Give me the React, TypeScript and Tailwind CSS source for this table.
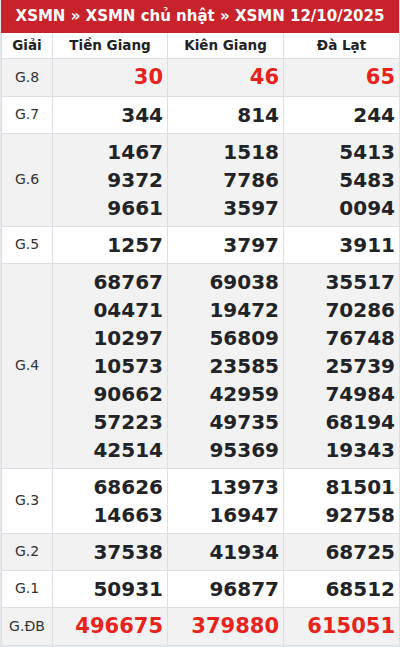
import React from "react";

const rows: { label: string; nums: string[][]; red?: boolean; gray: boolean }[] = [
  { label: "G.8", nums: [["30"], ["46"], ["65"]], red: true, gray: true },
  { label: "G.7", nums: [["344"], ["814"], ["244"]], gray: false },
  { label: "G.6", nums: [["1467", "9372", "9661"], ["1518", "7786", "3597"], ["5413", "5483", "0094"]], gray: true },
  { label: "G.5", nums: [["1257"], ["3797"], ["3911"]], gray: false },
  {
    label: "G.4",
    nums: [
      ["68767", "04471", "10297", "10573", "90662", "57223", "42514"],
      ["69038", "19472", "56809", "23585", "42959", "49735", "95369"],
      ["35517", "70286", "76748", "25739", "74984", "68194", "19343"],
    ],
    gray: true,
  },
  { label: "G.3", nums: [["68626", "14663"], ["13973", "16947"], ["81501", "92758"]], gray: false },
  { label: "G.2", nums: [["37538"], ["41934"], ["68725"]], gray: true },
  { label: "G.1", nums: [["50931"], ["96877"], ["68512"]], gray: false },
  { label: "G.ĐB", nums: [["496675"], ["379880"], ["615051"]], red: true, gray: true },
];

export default function App() {
  return (
    <div
      className="w-[400px] h-[647px] bg-[#e4e7eb] px-[1px]"
      style={{ fontFamily: "'DejaVu Sans', 'Liberation Sans', sans-serif" }}
    >
      <div className="h-[33px] bg-[#c8222b] flex items-center justify-center text-white font-bold text-[15px]">
        XSMN » XSMN chủ nhật » XSMN 12/10/2025
      </div>
      <table className="w-full border-collapse table-fixed bg-white">
        <colgroup>
          <col className="w-[51px]" />
          <col className="w-[115px]" />
          <col className="w-[116px]" />
          <col className="w-[116px]" />
        </colgroup>
        <thead>
          <tr className="h-[25px]">
            {["Giải", "Tiền Giang", "Kiên Giang", "Đà Lạt"].map((h, i) => (
              <th
                key={i}
                className="border border-[#dcdfe4] border-t-0 text-[13.5px] font-bold text-[#222] text-center p-0 leading-[24px]"
              >
                {h}
              </th>
            ))}
          </tr>
        </thead>
        <tbody>
          {rows.map((r) => (
            <tr key={r.label} className={r.gray ? "bg-[#f2f2f3]" : "bg-white"}>
              <td className="border border-[#dcdfe4] text-center text-[14px] text-[#333] p-0">{r.label}</td>
              {r.nums.map((col, ci) => (
                <td
                  key={ci}
                  className={`border border-[#dcdfe4] text-right pr-[4px] py-[4px] font-bold ${
                    r.red ? "text-[#e8231b] text-[21px] leading-[29px]" : "text-[#222326] text-[20px] leading-[28px]"
                  }`}
                >
                  {col.map((n, ni) => (
                    <div key={ni}>{n}</div>
                  ))}
                </td>
              ))}
            </tr>
          ))}
        </tbody>
      </table>
    </div>
  );
}
